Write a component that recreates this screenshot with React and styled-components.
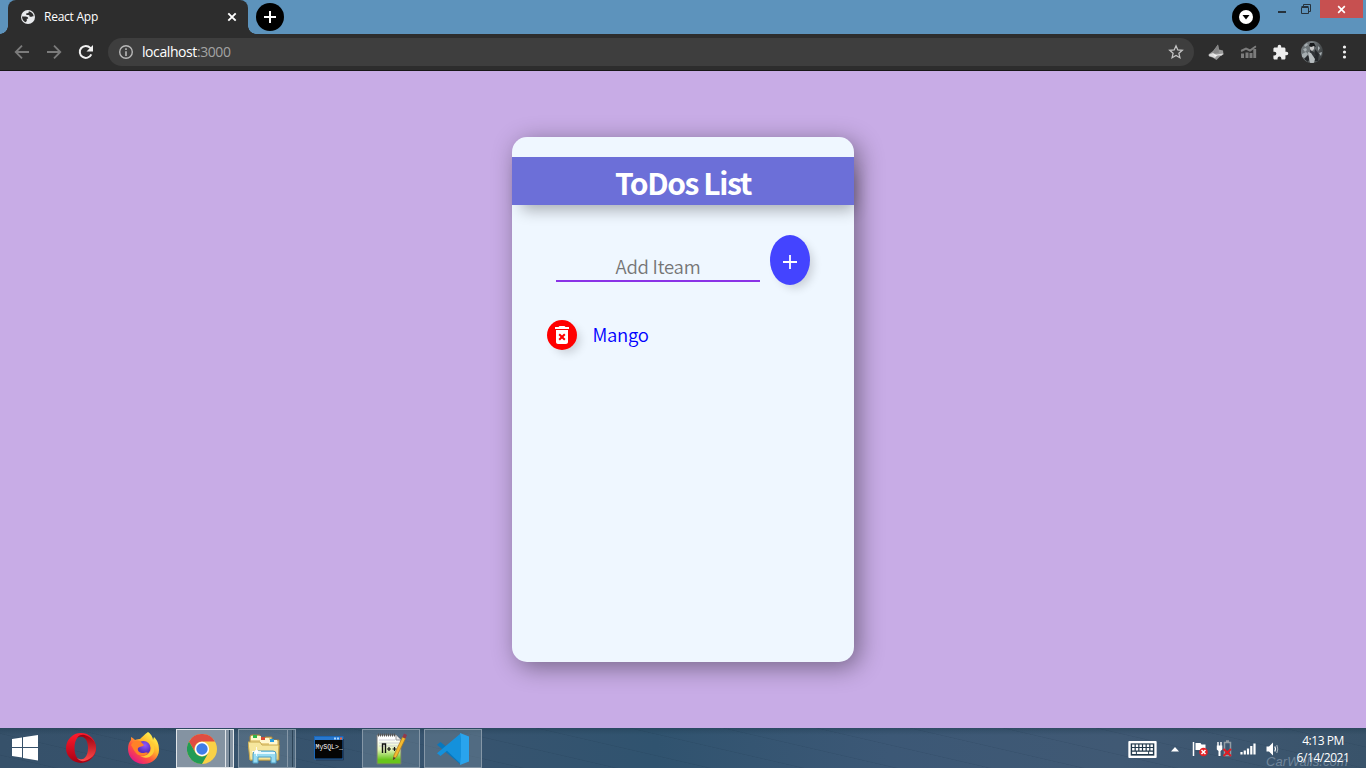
import React from "react";
import styled, { createGlobalStyle, css } from "styled-components";

const uiFont = `"Open Sans", "Noto Sans", sans-serif`;
const pageFont = `"Noto Sans CJK SC", "Noto Sans", sans-serif`;

const GlobalStyle = createGlobalStyle`
  * { box-sizing: border-box; }
  html, body { margin: 0; padding: 0; }
  body { width: 1366px; height: 768px; overflow: hidden; }
  svg { display: block; flex: none; }
  button { border: 0; padding: 0; margin: 0; background: none; }
`;

const Desktop = styled.div`
  width: 1366px;
  height: 768px;
  display: flex;
  flex-direction: column;
  font-family: ${uiFont};
`;

const TitleBar = styled.div`
  height: 34px;
  flex: none;
  display: flex;
  align-items: flex-start;
  background: #5d93bc;
  padding: 0 3px 0 8px;
`;

const Tab = styled.div`
  position: relative;
  width: 240px;
  height: 34px;
  background: #2d2d2d;
  border-radius: 8px 8px 0 0;
  display: flex;
  align-items: center;
  padding: 0 11px 0 12px;
  &::before,
  &::after {
    content: "";
    position: absolute;
    bottom: 0;
    width: 8px;
    height: 8px;
  }
  &::before {
    left: -8px;
    background: radial-gradient(circle at 0 0, transparent 7.5px, #2d2d2d 8px);
  }
  &::after {
    right: -8px;
    background: radial-gradient(circle at 100% 0, transparent 7.5px, #2d2d2d 8px);
  }
`;

const TabTitle = styled.span`
  flex: 1;
  margin-left: 8px;
  font-size: 12px;
  line-height: 16px;
  letter-spacing: -0.25px;
  color: #fff;
`;

const RoundButton = styled.button`
  width: 28px;
  height: 28px;
  margin-top: 3px;
  margin-left: ${(p) => p.$left};
  border-radius: 50%;
  background: #000;
  display: grid;
  place-items: center;
`;

const WindowButtons = styled.div`
  display: flex;
  margin-left: 10px;
`;

const WindowButton = styled.button`
  width: ${(p) => p.$w}px;
  height: 18px;
  display: grid;
  place-items: center;
  padding-right: ${(p) => p.$shift || 0}px;
  background: ${(p) => (p.$close ? "#c75050" : "transparent")};
`;

const Toolbar = styled.div`
  height: 37px;
  flex: none;
  display: flex;
  align-items: center;
  background: #2d2d2d;
  border-bottom: 1px solid #171717;
  padding: 0 6px;
`;

const ToolButton = styled.button`
  width: 32px;
  height: 36px;
  display: grid;
  place-items: center;
`;

const AddressBar = styled.div`
  flex: 1;
  height: 28px;
  margin: 0 6px;
  padding: 0 10px;
  border-radius: 14px;
  background: #3e3e3e;
  display: flex;
  align-items: center;
`;

const Url = styled.span`
  flex: 1;
  margin-left: 8px;
  font-size: 14px;
  letter-spacing: -0.42px;
  line-height: 20px;
  color: #fff;
  span { color: #a3a3a3; }
`;

const Page = styled.main`
  flex: 1;
  background: #c8ace6;
  display: flex;
  justify-content: center;
  align-items: flex-start;
  padding-top: 66px;
  font-family: ${pageFont};
`;

const Card = styled.section`
  width: 342px;
  height: 525px;
  border-radius: 15px;
  background: #eff7ff;
  box-shadow: 5px 5px 25px 0 rgba(0, 0, 0, 0.42);
  padding-top: 20px;
`;

const CardTitle = styled.h1`
  height: 48px;
  margin: 0;
  padding-top: 1px;
  background: #6c6fd8;
  color: #fff;
  font-size: 30px;
  line-height: 48px;
  font-weight: 700;
  letter-spacing: -1.4px;
  text-align: center;
  box-shadow: 5px 10px 15px -5px rgba(0, 0, 0, 0.3);
`;

const AddRow = styled.div`
  display: flex;
  align-items: flex-start;
  padding: 30px 44px 0;
  gap: 10px;
`;

const ItemInput = styled.input`
  width: 204px;
  height: 30px;
  margin-top: 17px;
  padding: 0;
  border: 0;
  border-bottom: 2px solid #8a33e6;
  background: transparent;
  text-align: center;
  font-family: ${pageFont};
  font-size: 18.5px;
  font-weight: 350;
  letter-spacing: -0.25px;
  outline: none;
  &::placeholder { color: #757575; opacity: 1; }
`;

const dropShadow = css`
  box-shadow: 5px 5px 10px -2px rgba(0, 0, 0, 0.16);
`;

const AddButton = styled.button`
  width: 40px;
  height: 50px;
  border-radius: 50%;
  background: #4444ff;
  display: grid;
  place-items: center;
  padding-top: 4px;
  ${dropShadow}
`;

const ItemRow = styled.div`
  display: flex;
  align-items: center;
  height: 30px;
  margin: 35px 0 0 35px;
`;

const DeleteButton = styled.button`
  width: 30px;
  height: 30px;
  border-radius: 50%;
  background: #ff0000;
  display: grid;
  place-items: center;
  ${dropShadow}
`;

const ItemText = styled.span`
  margin-left: 15.5px;
  margin-bottom: 2px;
  font-size: 18.5px;
  line-height: 30px;
  font-weight: 350;
  letter-spacing: -0.3px;
  color: #0000ff;
`;

const Taskbar = styled.footer`
  height: 40px;
  flex: none;
  display: flex;
  gap: 4px;
  background:
    repeating-linear-gradient(13deg, transparent 0 12px, rgba(20, 43, 64, 0.13) 12.5px, transparent 13.5px 21px),
    linear-gradient(180deg, rgba(29, 57, 76, 0.4), transparent 7px),
    linear-gradient(90deg, #36516a 0%, #37546f 35%, #30536f 48%, #3c5876 65%, #405974 82%, #39536a 100%);
`;

const TaskSlot = styled.div`
  position: relative;
  width: ${(p) => p.$w || 58}px;
  height: 40px;
  display: grid;
  place-items: center;
  padding-left: ${(p) => p.$shift || 0}px;
`;

const TaskWindow = styled(TaskSlot)`
  height: 39px;
  border: 1px solid ${(p) => (p.$active ? "#e0e5e9" : "#8597a7")};
  margin: 1px 0 0;
  background: ${(p) => (p.$active ? "#8493a2" : "rgba(133,151,165,.35)")};
  ${(p) => p.$stacked && css`
    padding-right: ${p.$active ? "6px" : "7px"};
    &::after {
      content: "";
      position: absolute;
      right: ${p.$active ? "3px" : "2px"};
      top: 0;
      bottom: 0;
      width: ${p.$active ? "3px" : "4px"};
      border-left: 1px solid ${p.$active ? "#e0e5e9" : "#8597a7"};
      border-right: 1px solid #2c4357;
    }
  `}
`;

const Tray = styled.div`
  margin-left: auto;
  height: 40px;
  display: flex;
  align-items: center;
  padding: 2px 15px 0 0;
`;

const TrayIcon = styled.div`
  width: ${(p) => p.$w}px;
  height: 20px;
  margin-right: ${(p) => p.$gap}px;
  display: grid;
  place-items: center;
`;

const Clock = styled.div`
  position: relative;
  width: 56px;
  height: 34px;
  margin-top: -1px;
  text-align: center;
  font-size: 12px;
  line-height: 17px;
  letter-spacing: -0.45px;
  color: #fff;
  white-space: nowrap;
  div { position: relative; }
`;

const Watermark = styled.span`
  position: absolute;
  left: -29px;
  top: 22px;
  line-height: 15px;
  font-family: "Liberation Sans", sans-serif;
  font-style: italic;
  font-size: 13px;
  letter-spacing: 0.1px;
  color: #71869b;
`;

const Globe = () => (
  <svg width="16" height="16" viewBox="0 0 16 16">
    <circle cx="8" cy="8" r="7" fill="#e8eaed" />
    <path d="M2 7.500h3.600c1.600 0 2.600.9 2.600 2.300H6.800v2.200l-1.400 1.300C3.300 12.300 2 10 2 7.500zM8.800 2.200c.2 1.300-.4 2-1.500 2H6.300v1.900H8.500c.9 0 1.100.8 1.200 1.700h1.400c.9 0 1.200-.6 2.600-.6-.3-2.600-2-4.400-4.900-5z" fill="#2d2d2d" />
  </svg>
);

const Cross = ({ size = 10, color = "#fff", width = 1.7 }) => (
  <svg width={size} height={size} viewBox="0 0 10 10">
    <path d="M1.300 1.300l7.400 7.400M8.700 1.300L1.300 8.700" stroke={color} strokeWidth={width} />
  </svg>
);

const Arrow = ({ flip }) => (
  <svg width="16" height="16" viewBox="0 0 16 16" transform={flip ? "scale(-1 1)" : undefined}>
    <path d="M15 8H2M8 1.700L1.700 8 8 14.300" fill="none" stroke="#7b7b7b" strokeWidth="1.800" />
  </svg>
);

const Reload = () => (
  <svg width="16" height="16" viewBox="0 0 16 16">
    <path d="M13.300 10.300A6 6 0 1 1 12.300 3.900L14 5.600" fill="none" stroke="#f1f1f1" strokeWidth="2" />
    <path d="M15 1v6.500H8.500z" fill="#f1f1f1" />
  </svg>
);

const Info = () => (
  <svg width="16" height="16" viewBox="0 0 16 16">
    <circle cx="8" cy="8" r="6.300" fill="none" stroke="#b8b8b8" strokeWidth="1.400" />
    <path d="M8 7.300V12M8 4.300v1.600" stroke="#b8b8b8" strokeWidth="1.600" />
  </svg>
);

const Star = () => (
  <svg width="16" height="16" viewBox="0 0 16 16">
    <path d="M8 1.800l1.800 4.100 4.500.4-3.400 3 1 4.400L8 11.400l-3.900 2.300 1-4.400-3.400-3 4.500-.4z" fill="none" stroke="#c4c4c4" strokeWidth="1.300" />
  </svg>
);

const Fox = () => (
  <svg width="16" height="16" viewBox="0 0 16 16">
    <path d="M1 10l4-3 5-6.500 1 5 4 1 .5 4-3 1.500-4 4-4-2.500-3.500-1z" fill="#999" />
    <path d="M10 .5L6 6.500 5 10l6-1.500z" fill="#858585" />
    <path d="M0 11l5-2 3 1.500 7.500-1-2 2H9l-2 2.500-4-1.500z" fill="#dcdcdc" />
    <path d="M5 10l3 1 2 .5-3 1z" fill="#f4f4f4" />
  </svg>
);

const Chart = () => (
  <svg width="16" height="14" viewBox="0 0 16 14" transform="translate(.5 0)">
    <path d="M2 13V8.500M6.500 13V7.500M10.500 13V8M14.300 13V4" stroke="#7c7c7c" strokeWidth="3" />
    <path d="M.5 6L5.500 3.500 9.500 5.500 15.500 1.200" fill="none" stroke="#7c7c7c" strokeWidth="2" />
  </svg>
);

const Puzzle = () => (
  <svg width="17" height="17" viewBox="0 0 24 24">
    <path fill="#eee" d="M20.500 11H19V7c0-1.100-.9-2-2-2h-4V3.500a2.500 2.500 0 0 0-5 0V5H4c-1.100 0-2 .9-2 2v3.800h1.500a2.700 2.700 0 0 1 0 5.400H2V20c0 1.100.9 2 2 2h3.800v-1.500a2.700 2.700 0 0 1 5.400 0V22H17c1.100 0 2-.9 2-2v-4h1.500a2.500 2.500 0 0 0 0-5z" />
  </svg>
);

const Avatar = () => (
  <svg width="22" height="22" viewBox="0 0 22 22">
    <defs>
      <clipPath id="avatar"><circle cx="11" cy="11" r="11" /></clipPath>
      <linearGradient id="avatarBack" x1="0" x2="1" y1="0" y2="0.400">
        <stop offset="0" stopColor="#4b5053" />
        <stop offset=".4" stopColor="#7b8184" />
        <stop offset="1" stopColor="#3f4345" />
      </linearGradient>
    </defs>
    <g clipPath="url(#avatar)">
      <rect width="22" height="22" fill="url(#avatarBack)" />
      <path d="M0 6l7-2 2 5-3 5-6-1z" fill="#6d7477" />
      <path d="M2 8l3-1 1 2-2 2zM1 13l4-2 2 2-3 4-3-1zM3 4l3-2 1 2-3 2zM17 5l2 2-2 3zM18 12l3-1-1 4z" fill="#a5adb0" />
      <path d="M14 8l4 5-1 7h-5zM7 14l2 3-2 4-4-3z" fill="#25282b" />
      <path d="M9 9l4 2 2 4-3 1-3-3z" fill="#303438" />
      <path d="M7 11l3 1 4 6-1 4H9l-1-5z" fill="#b7bdbf" />
      <path d="M9 4h4v4l-2 2-2-2z" fill="#c8c8c8" />
      <path d="M8 5l1-3h4l2 4-2-1-3 1z" fill="#17191b" />
    </g>
  </svg>
);

const Dots = () => (
  <svg width="16" height="16" viewBox="0 0 16 16" fill="#f1f1f1">
    <circle cx="8.500" cy="3" r="1.600" /><circle cx="8.500" cy="8" r="1.600" /><circle cx="8.500" cy="13" r="1.600" />
  </svg>
);

const TrashX = () => (
  <svg width="20" height="20" viewBox="0 0 24 24">
    <path fill="#fff" d="M6 19c0 1.100.9 2 2 2h8c1.100 0 2-.9 2-2V7H6v12zm2.460-7.120 1.410-1.410L12 12.590l2.120-2.120 1.410 1.410L13.410 14l2.120 2.120-1.410 1.410L12 15.410l-2.120 2.120-1.410-1.410L10.590 14l-2.130-2.120zM15.500 4l-1-1h-5l-1 1H5v2h14V4z" transform="translate(-2.400 -2.400) scale(1.200)" />
  </svg>
);

const WindowsLogo = () => (
  <svg width="26" height="26" viewBox="0 0 26 26" fill="#fff">
    <path d="M0 4l10-1.500V12H0zM11 2.300L26 0v12H11zM0 13h10v9.500L0 21zM11 13h15v12.500L11 23z" />
  </svg>
);

const Opera = () => (
  <svg width="30" height="30" viewBox="0 0 30 30">
    <defs>
      <linearGradient id="operaA" x2="0" y2="1"><stop stopColor="#ff1b2d" /><stop offset="1" stopColor="#a70014" /></linearGradient>
      <linearGradient id="operaB" x2="0" y2="1"><stop stopColor="#9c0010" /><stop offset="1" stopColor="#ff4b4b" /></linearGradient>
    </defs>
    <path fillRule="evenodd" fill="url(#operaA)" d="M15 0a15 15 0 1 0 0 30 15 15 0 0 0 0-30zm1 2c4 0 6.500 5.500 6.500 13S20 28 16 28 8.500 22.500 8.500 15 12 2 16 2z" />
    <path fill="url(#operaB)" d="M11 5c2-3 6-4 9-2.500C25 4 30 8.500 30 15s-5 11-10 12.500c-3 1.500-7 .5-9-2.500 7 4 11-2 11-10S18 1 11 5z" />
  </svg>
);

const Firefox = () => (
  <svg width="31" height="32" viewBox="0 0 31 32">
    <defs>
      <linearGradient id="ffBody" x1=".85" y1=".1" x2=".2" y2=".95">
        <stop stopColor="#fff44f" /><stop offset=".35" stopColor="#ffb52b" /><stop offset=".65" stopColor="#ff533d" /><stop offset="1" stopColor="#e31587" />
      </linearGradient>
      <radialGradient id="ffCore" cx=".6" cy=".3"><stop stopColor="#9059ff" /><stop offset="1" stopColor="#5b2fbd" /></radialGradient>
    </defs>
    <path fill="url(#ffBody)" d="M20 0c4 3 5 6 5 8l1-3c4 4 5 8 5 13 0 8-7 14-15.500 14S0 25.500 0 17c0-4 1-7 3-9V5c2 1 3 2 4 3 2-1 4-1 5-1 2-2 4-4 8-7z" />
    <circle cx="15.500" cy="16" r="7" fill="url(#ffCore)" />
    <path d="M3 13c3-5 6-5 9-4l4 4c-1 2-4 1-6 3-1 3 2 5 5 5 2 0 3-1 5 0-2 3-9 4-12 0-2-2-3-5-5-8z" fill="#ff8127" />
    <path d="M18 8c4 1 6 5 5 10-2 5-7 7-11 6 9 5 16-2 14-10-1-4-4-6-8-6z" fill="#ffcb35" />
  </svg>
);

const Chrome = () => (
  <svg width="30" height="30" viewBox="0 0 30 30">
    <circle cx="15" cy="15" r="15" fill="#f9d147" />
    <path d="M2 7.500A15 15 0 0 1 28 7.500H15a7.500 7.500 0 0 0-6.500 11.300z" fill="#df4d42" />
    <path d="M2 7.500A15 15 0 0 0 15 30l6.500-11.200a7.500 7.500 0 0 1-13 0z" fill="#229b55" />
    <circle cx="15" cy="15" r="7.200" fill="#fff" /><circle cx="15" cy="15" r="5.700" fill="#3f7de8" />
  </svg>
);

const Explorer = () => (
  <svg width="32" height="30" viewBox="0 0 32 30">
    <path d="M2 3q0-2 2-2h8v3h5V3h7v3h7v20H2z" fill="#ead287" stroke="#a7853c" />
    <path d="M3 2h10v4H3zM12 4h9v5h-9zM21 6h8v5h-8z" fill="#fff7ce" />
    <path d="M5 1h4v3H5z" fill="#2eb649" /><path d="M13 3h4v3h-4z" fill="#d94a34" /><path d="M22 5h4v3h-4z" fill="#289ce1" />
    <path d="M0 8h12l2 3h17l-1 15H2z" fill="#f6e69d" stroke="#c8a94e" />
    <path d="M5 29V20q0-3 3-3h17q3 0 3 3v9h-5v-6H10v6z" fill="#98dcf2" stroke="#4c9ec5" />
    <path d="M6 19h21" stroke="#e6faff" strokeWidth="2" /><path d="M8.500 13v9M4 17.500h9" stroke="#fff" strokeWidth=".8" />
    <circle cx="8.500" cy="17.500" r="1.800" fill="#fff" />
  </svg>
);

const MySql = () => (
  <svg width="30" height="25" viewBox="0 0 30 25">
    <rect x=".5" y=".5" width="28.500" height="22.500" fill="#050505" stroke="#1a67b9" />
    <path d="M1 1h28v3H1z" fill="#2878cf" /><path d="M20 1.500h2v2h-2zM23 1.500h2v2h-2z" fill="#a7d4ff" /><path d="M26 1.500h2v2h-2z" fill="#ef6239" />
    <text x="1.500" y="13" fill="#fff" fontFamily="Liberation Mono, monospace" fontSize="6.500">MySQL&gt;_</text>
    <path d="M2 24h27.500V3" fill="none" stroke="#233a57" />
  </svg>
);

const NotepadPP = () => (
  <svg width="31" height="32" viewBox="0 0 31 32">
    <defs><linearGradient id="npPage" x2="0" y2="1"><stop offset=".15" stopColor="#fff" /><stop offset=".5" stopColor="#e5f5b9" /><stop offset=".85" stopColor="#68c51b" /></linearGradient></defs>
    <path d="M1 2h19l5 5v24H1z" fill="url(#npPage)" stroke="#777" />
    <path d="M2 2h17" stroke="#555" strokeWidth="3" strokeDasharray="1 1" />
    <path d="M3 7h16M3 10h20M3 13h20" stroke="#bbc" strokeWidth=".7" />
    <path d="M20 2v5h5" fill="#eee" stroke="#999" />
    <path d="M6.500 20v-9h3v9" fill="none" stroke="#111" strokeWidth="1.400" />
    <path d="M11 16h4M13 14v4M16.500 16h4M18.500 14v4" stroke="#111" strokeWidth="1.200" />
    <path d="M17 27l1-5L26.500 4l3 1.500-9 18.500z" fill="#f3ba2f" stroke="#a87521" strokeWidth=".7" />
    <path d="M26.500 4L28 .5 31 2l-1.500 3.500z" fill="#93384b" /><path d="M17 27l.6-3 2 1z" fill="#333" />
  </svg>
);

const VsCode = () => (
  <svg width="32" height="32" viewBox="0 0 32 32">
    <path d="M24 1L10 14.200 3.500 9 0 11.700 23 31l1-8z" fill="#0878be" />
    <path d="M24 31L10 17.800 3.500 23 0 20.300 23 1l1 8z" fill="#1491dc" />
    <path d="M23 0l9 3.500v25L23 32l1-9V9z" fill="#29a4ed" />
  </svg>
);

const Keyboard = () => (
  <svg width="29" height="17" viewBox="0 0 30 18">
    <rect width="30" height="18" rx="1" fill="#fff" />
    <rect x="2.500" y="2.500" width="25" height="13" fill="#21384b" />
    <path d="M4 5h22M4 8.800h22" stroke="#fff" strokeWidth="2.600" strokeDasharray="2.600 1.280" />
    <path d="M4 12.600h4M9 12.600h12M22 12.600h4" stroke="#fff" strokeWidth="2.400" />
  </svg>
);

const Flag = () => (
  <svg width="16" height="18" viewBox="0 0 16 18">
    <path d="M1.500 2v14" stroke="#fff" strokeWidth="1.500" /><path d="M3.500 3h5l1 1.500h4V11H9L8 10H3.500z" fill="#fff" />
    <circle cx="11.500" cy="12" r="4.300" fill="#e32227" /><path d="M9.500 10l4 4M13.500 10l-4 4" stroke="#fff" strokeWidth="1.500" />
  </svg>
);

const Power = () => (
  <svg width="17" height="18" viewBox="0 0 17 18">
    <path d="M2 2v4M5 2v4" stroke="#fff" strokeWidth="1.400" />
    <path d="M.8 5.500h5.500v4L4.500 11v5h-2v-5L.8 9.500z" fill="#fff" />
    <path d="M8.500 2.500h6v13h-6zM10 1h3" fill="none" stroke="#929da5" strokeWidth="1.500" />
    <path d="M7.500 9l7.500 7M15 9l-7.500 7" stroke="#e31d24" strokeWidth="2" />
  </svg>
);

const Signal = () => (
  <svg width="16" height="16" viewBox="0 0 16 16" stroke="#fff" strokeWidth="2.200">
    <path d="M1.500 13.500v-2.500M4.800 13.500V9.500M8 13.500V7.500M11.300 13.500V5M14.500 13.500V2.500" />
  </svg>
);

const Speaker = () => (
  <svg width="14" height="16" viewBox="0 0 14 16">
    <path d="M.5 5.500h2.500L7 1.500v13l-4-4H.5z" fill="#fff" /><path d="M8.800 5.500q1.500 2.500 0 5" fill="none" stroke="#fff" strokeWidth="1.300" /><path d="M10.800 4q2 4 0 8" fill="none" stroke="#aab5bd" />
  </svg>
);

export default function App() {
  return (
    <Desktop>
      <GlobalStyle />
      <TitleBar>
        <Tab><Globe /><TabTitle>React App</TabTitle><Cross width={1.900} /></Tab>
        <RoundButton $left="8px"><svg width="12" height="12"><path d="M6 0v12M0 6h12" stroke="#fff" strokeWidth="2" /></svg></RoundButton>
        <RoundButton $left="auto"><svg width="14" height="14"><circle cx="7" cy="7" r="7" fill="#fff" /><path d="M3.500 5h7L7 9.500z" fill="#000" /></svg></RoundButton>
        <WindowButtons>
          <WindowButton $w={24}><svg width="8" height="18"><path d="M0 12h8" stroke="#26323c" strokeWidth="2" /></svg></WindowButton>
          <WindowButton $w={26} $shift={3}><svg width="10" height="10" fill="none" stroke="#26323c"><path d="M2.500 2V.5h7v7H8M.5 3.500h7v6h-7zM.5 2.500h7" /></svg></WindowButton>
          <WindowButton $w={43} $close><Cross size={9} width={1.800} /></WindowButton>
        </WindowButtons>
      </TitleBar>
      <Toolbar>
        <ToolButton><Arrow /></ToolButton>
        <ToolButton><Arrow flip /></ToolButton>
        <ToolButton><Reload /></ToolButton>
        <AddressBar><Info /><Url>localhost<span>:3000</span></Url><Star /></AddressBar>
        <ToolButton><Fox /></ToolButton>
        <ToolButton><Chart /></ToolButton>
        <ToolButton><Puzzle /></ToolButton>
        <ToolButton><Avatar /></ToolButton>
        <ToolButton><Dots /></ToolButton>
      </Toolbar>
      <Page>
        <Card>
          <CardTitle>ToDos List</CardTitle>
          <AddRow>
            <ItemInput placeholder="Add Iteam" />
            <AddButton><svg width="14" height="14"><path d="M7 0v14M0 7h14" stroke="#fff" strokeWidth="1.800" /></svg></AddButton>
          </AddRow>
          <ItemRow>
            <DeleteButton><TrashX /></DeleteButton>
            <ItemText>Mango</ItemText>
          </ItemRow>
        </Card>
      </Page>
      <Taskbar>
        <TaskSlot $w={48} $shift={2}><WindowsLogo /></TaskSlot>
        <TaskSlot><Opera /></TaskSlot>
        <TaskSlot><Firefox /></TaskSlot>
        <TaskWindow $active $stacked><Chrome /></TaskWindow>
        <TaskWindow $stacked><Explorer /></TaskWindow>
        <TaskSlot><MySql /></TaskSlot>
        <TaskWindow><NotepadPP /></TaskWindow>
        <TaskWindow><VsCode /></TaskWindow>
        <Tray>
          <TrayIcon $w={30} $gap={14}><Keyboard /></TrayIcon>
          <TrayIcon $w={8} $gap={13}><svg width="8" height="5"><path d="M0 4.500L4 0l4 4.500z" fill="#fff" /></svg></TrayIcon>
          <TrayIcon $w={16} $gap={8}><Flag /></TrayIcon>
          <TrayIcon $w={17} $gap={7}><Power /></TrayIcon>
          <TrayIcon $w={16} $gap={10}><Signal /></TrayIcon>
          <TrayIcon $w={14} $gap={15}><Speaker /></TrayIcon>
          <Clock><Watermark>CarWalls.com</Watermark><div>4:13 PM</div><div>6/14/2021</div></Clock>
        </Tray>
      </Taskbar>
    </Desktop>
  );
}
